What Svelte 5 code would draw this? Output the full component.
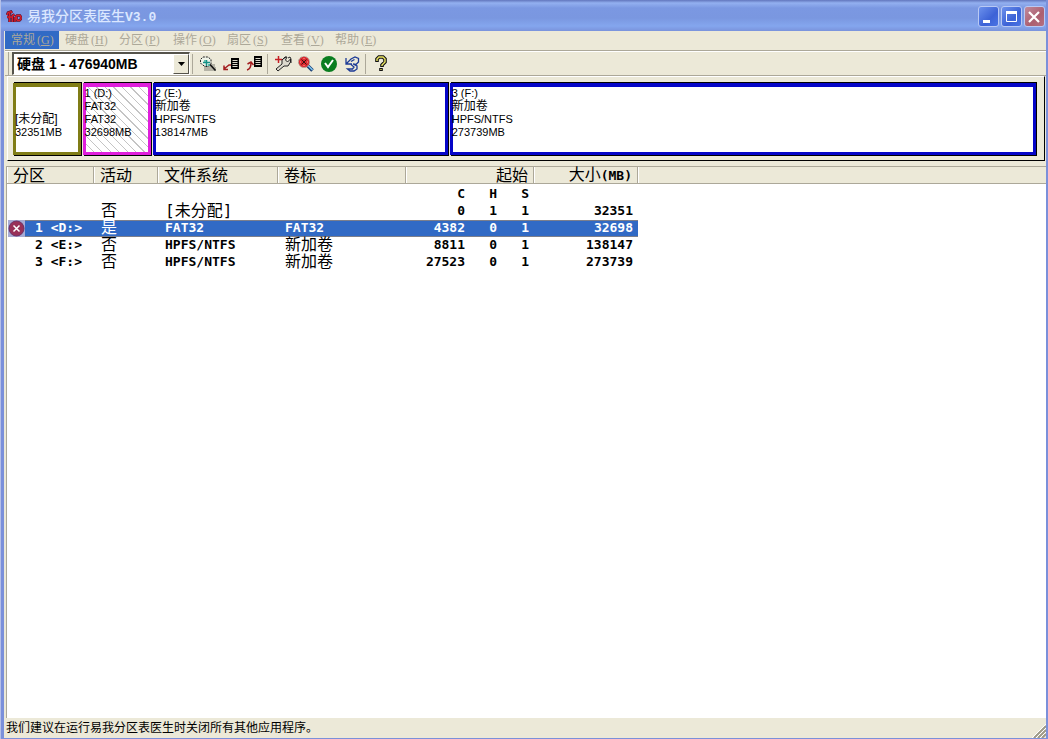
<script>
  const menus = [
    { label: '常规', key: 'G' },
    { label: '硬盘', key: 'H' },
    { label: '分区', key: 'P' },
    { label: '操作', key: 'O' },
    { label: '扇区', key: 'S' },
    { label: '查看', key: 'V' },
    { label: '帮助', key: 'E' }
  ];

  const partitions = [
    { no: '', drive: '', active: '否', fs: '[未分配]', label: '', c: 0, h: 1, s: 1, size: 32351, kind: 'free', lines: ['[未分配]'] },
    { no: '1', drive: '<D:>', active: '是', fs: 'FAT32', label: 'FAT32', c: 4382, h: 0, s: 1, size: 32698, kind: 'fat', lines: ['1 (D:)', 'FAT32', 'FAT32'] },
    { no: '2', drive: '<E:>', active: '否', fs: 'HPFS/NTFS', label: '新加卷', c: 8811, h: 0, s: 1, size: 138147, kind: 'ntfs', lines: ['2 (E:)', '新加卷', 'HPFS/NTFS'] },
    { no: '3', drive: '<F:>', active: '否', fs: 'HPFS/NTFS', label: '新加卷', c: 27523, h: 0, s: 1, size: 273739, kind: 'ntfs', lines: ['3 (F:)', '新加卷', 'HPFS/NTFS'] }
  ];

  let selected = 1;
  let disk = '1';

  const isHan = (text) => /[\u4e00-\u9fff]/.test(text);
</script>

<div class="window">
  <header class="titlebar">
    <svg class="logo" width="16" height="16" viewBox="0 0 16 16" aria-hidden="true">
      <path d="M1 6L2 3.500L5 2.500L6 4M3.500 4V13M1 8H6.500M6.500 13V6.500L8.500 5.500M9 13V8M9.500 8L11 6.500H14L15 8V10L13.500 11.500H11.500L10.500 10V8" fill="none" stroke="#4c1232" stroke-width="2.6" />
      <path d="M1 6L2 3.500L5 2.500L6 4M3.500 4V13M1 8H6.500M6.500 13V6.500L8.500 5.500M9 13V8M9.500 8L11 6.500H14L15 8V10L13.500 11.500H11.500L10.500 10V8" fill="none" stroke="#d8202c" stroke-width="1.4" />
    </svg>
    <h1>易我分区表医生<span>V3.0</span></h1>
    <div class="controls">
      <button aria-label="最小化"><svg width="18" height="18" viewBox="0 0 18 18"><path d="M4 12h7v3H4z" fill="#fff" /></svg></button>
      <button aria-label="最大化"><svg width="18" height="18" viewBox="0 0 18 18"><path d="M4.500 4.500h10v9h-10z" fill="none" stroke="#fff" /><path d="M4 3h11v3H4z" fill="#fff" /></svg></button>
      <button class="close" aria-label="关闭"><svg width="18" height="18" viewBox="0 0 18 18"><path d="M4 4l10 10M14 4L4 14" stroke="#fff" stroke-width="2.2" /></svg></button>
    </div>
  </header>

  <div class="client">
    <nav class="menubar">
      {#each menus as menu, i}
        <button class:open={i === 0}>{menu.label}<span class="key">(<u>{menu.key}</u>)</span></button>
      {/each}
    </nav>

    <div class="toolbar">
      <div class="combo">
        <select bind:value={disk} aria-label="硬盘">
          <option value="1">硬盘 1 - 476940MB</option>
        </select>
        <span class="drop"><svg width="7" height="4" viewBox="0 0 7 4"><path d="M0 0h7L3.5 4z" /></svg></span>
      </div>
      <div class="group">
        <button aria-label="查找分区">
          <svg width="18" height="18" viewBox="0 0 18 18">
            <path d="M5 11h3V9h8v3h1v4H5z" fill="#b5b3a6" />
            <path d="M3 9.500L1.500 8V4.500L4 2h5l3 2.500V9l-3 2.500H6z" fill="#eef3e8" stroke="#222" stroke-dasharray="2 1" />
            <path d="M4 7.500h7M7.500 5v6" stroke="#159086" stroke-width="1.500" />
            <path d="M5 5h2v2H5zM9 9h2v2H9z" fill="#5dbcae" />
            <path d="M11 9.500l5.500 6" stroke="#111" stroke-width="1.600" />
          </svg>
        </button>
        <button aria-label="保存分区表">
          <svg width="18" height="18" viewBox="0 0 18 18">
            <path d="M9 3h8v11H9z" fill="#000" />
            <path d="M10.500 5.500h5M10.500 7.500h5M10.500 9.500h5M10.500 11.500h5" stroke="#d9d7ca" />
            <path d="M9 10H7l-5 4M2 10.500V14.500h4" fill="none" stroke="#a31e20" stroke-width="1.5" />
          </svg>
        </button>
        <button aria-label="恢复分区表">
          <svg width="18" height="18" viewBox="0 0 18 18">
            <path d="M9 1h8v11H9z" fill="#000" />
            <path d="M10.500 3.500h5M10.500 5.500h5M10.500 7.500h5M10.500 9.500h5" stroke="#d9d7ca" />
            <path d="M2 15q4-1 4-7M2.500 9l3.500-2l2.500 3" fill="none" stroke="#a31e20" stroke-width="1.5" />
          </svg>
        </button>
      </div>
      <div class="group">
        <button aria-label="修复">
          <svg width="18" height="18" viewBox="0 0 18 18">
            <path d="M4.500 1v7M1 4.500h7" stroke="#c51f25" stroke-width="1.500" />
            <path d="M2 14l6-5V5l3-3h2l-1.500 3l2 2l3-3v3l-2.500 4h-4L4 16z" fill="#dcd9cd" stroke="#222" />
            <path d="M9 4l3-2M14 3l2-1l1 2v4" fill="none" stroke="#222" />
          </svg>
        </button>
        <button aria-label="删除分区">
          <svg width="18" height="18" viewBox="0 0 18 18">
            <path d="M10 10l5.500 5.500" stroke="#173a70" stroke-width="3.600" />
            <path d="M10.500 10l5 5" stroke="#7cc4ee" stroke-width="1.600" />
            <circle cx="7" cy="7" r="5.500" fill="#dc2a30" stroke="#a49e94" stroke-dasharray="2 1" />
            <path d="M4.500 4.500l5 5M9.500 4.500l-5 5" stroke="#3d1012" />
            <path d="M7 3v1M3 7h1M7 10v1M10 7h1" stroke="#f9a7a4" />
          </svg>
        </button>
        <button aria-label="应用">
          <svg width="18" height="18" viewBox="0 0 18 18">
            <circle cx="9" cy="9" r="8" fill="#0a7d20" />
            <path d="M5 8l3 4l5-7" fill="none" stroke="#fff" stroke-width="2" />
          </svg>
        </button>
        <button aria-label="撤销">
          <svg width="18" height="18" viewBox="0 0 18 18">
            <path d="M3 3v6h6M3.500 8.500L8 4l4-2l3.500 1.500V7L13 9.500l-3-.5M8 6.500l3.500-2M10 9l4 2v3l-3 2H7l-2.500-2h5L11 12L8 9.500" fill="none" stroke="#1c3a96" stroke-width="1.300" />
          </svg>
        </button>
      </div>
      <div class="group">
        <button aria-label="帮助">
          <svg width="18" height="18" viewBox="0 0 18 18">
            <path d="M5 7V4l2-2h4l2 2v3l-3 3v2M9 13v3" fill="none" stroke="#111" stroke-width="3.600" />
            <path d="M5 6V4l2-2h4l2 2v3l-3 3v1M9 14v1" fill="none" stroke="#eee860" stroke-width="1.400" />
          </svg>
        </button>
      </div>
    </div>

    <section class="map" aria-label="分区图">
      {#each partitions as part, i}
        <div class="slot" style="flex-grow: {part.size}">
          <button class="part {part.kind}" class:hatched={i === selected} on:click={() => (selected = i)}>
            {#each part.lines as line}
              <span class:han={isHan(line)}>{line}</span>
            {/each}
            <span>{part.size}MB</span>
          </button>
        </div>
      {/each}
    </section>

    <main class="list">
      <table>
        <colgroup>
          <col class="c-icon" /><col class="c-no" /><col class="c-active" /><col class="c-fs" /><col class="c-label" />
          <col class="c-cyl" /><col class="c-head" /><col class="c-head" /><col class="c-size" /><col />
        </colgroup>
        <thead>
          <tr>
            <th colspan="2">分区</th>
            <th>活动</th>
            <th>文件系统</th>
            <th>卷标</th>
            <th colspan="3" class="num">起始</th>
            <th class="num">大小<span class="latin">(MB)</span></th>
            <th class="rest"></th>
          </tr>
        </thead>
        <tbody>
          <tr class="units">
            <td colspan="5"></td>
            <td class="num">C</td>
            <td class="num">H</td>
            <td class="num">S</td>
            <td colspan="2"></td>
          </tr>
          {#each partitions as part, i}
            <tr class:selected={i === selected} on:click={() => (selected = i)}>
              <td class="icon">
                {#if i === selected}
                  <svg width="17" height="17" viewBox="0 0 17 17">
                    <path d="M0 0h17v17H0z" fill="#a7abd3" />
                    <circle cx="8.5" cy="8.5" r="7.500" fill="#983058" stroke="#6c2f66" />
                    <path d="M5.500 5.500l6 6M11.500 5.500l-6 6" stroke="#fff" stroke-width="1.500" />
                  </svg>
                {/if}
              </td>
              <td class="no">{part.no} {part.drive}</td>
              <td class="han">{part.active}</td>
              <td class:han={isHan(part.fs)}>{part.fs}</td>
              <td class:han={isHan(part.label)}>{part.label}</td>
              <td class="num">{part.c}</td>
              <td class="num">{part.h}</td>
              <td class="num">{part.s}</td>
              <td class="num">{part.size}</td>
              <td class="rest"></td>
            </tr>
          {/each}
        </tbody>
      </table>
    </main>

    <footer class="status">
      <span>我们建议在运行易我分区表医生时关闭所有其他应用程序。</span>
      <svg width="14" height="14" viewBox="0 0 14 14" aria-hidden="true">
        <path d="M2 14L14 2M6 14l8-8M10 14l4-4" stroke="#9d9a88" stroke-width="2" />
        <path d="M0 14L14 0M4 14L14 4M8 14l6-6" stroke="#fff" />
      </svg>
    </footer>
  </div>
</div>

<style>
  :global(body) {
    margin: 0;
    background: #7b90da;
  }
  button {
    margin: 0;
    padding: 0;
    border: 0;
    background: none;
    font: inherit;
    color: inherit;
  }
  .window {
    display: flex;
    flex-direction: column;
    min-height: 100vh;
    box-sizing: border-box;
    padding: 0 2px 1px 0;
    border-left: 1px solid #b6c0e8;
    background: #7b90da;
    font-family: "Liberation Sans", "Noto Sans CJK SC", sans-serif;
    font-size: 12px;
    color: #000;
  }
  .titlebar {
    display: flex;
    align-items: center;
    height: 31px;
    padding: 2px 1px 0 5px;
    box-sizing: border-box;
    background: linear-gradient(#6276bd 0, #93b0f0 3px, #7b98e2 8px, #7a97e0 18px, #84a6ee 26px, #7a93dc 31px);
  }
  h1 {
    flex: 1;
    margin: 0 0 0 5px;
    font-size: 14px;
    font-weight: 500;
    line-height: 20px;
    color: #dbe7ff;
  }
  h1 span {
    font-family: "Liberation Mono", monospace;
    font-size: 13px;
    font-weight: bold;
  }
  .controls {
    display: flex;
    gap: 2px;
  }
  .controls button {
    width: 21px;
    height: 21px;
    box-sizing: border-box;
    border: 1px solid #b9c9f4;
    border-radius: 3px;
    background: linear-gradient(135deg, #6c91ec, #3c62d6 60%, #4a74e4);
  }
  .controls svg {
    display: block;
  }
  .controls .close {
    background: linear-gradient(135deg, #c08a9c, #ac5f70 60%, #b57080);
  }
  .client {
    flex: 1;
    display: flex;
    flex-direction: column;
    margin-left: 3px;
    padding-left: 1px;
    background: #ece9d8;
  }
  .menubar {
    display: flex;
    height: 19px;
    border-bottom: 1px solid #aca899;
  }
  .menubar button {
    width: 54px;
    height: 18px;
    padding-left: 6px;
    color: #aca899;
    line-height: 17px;
    text-align: left;
    white-space: nowrap;
  }
  .menubar .open {
    background: #316ac5;
  }
  .key {
    margin-left: 2px;
    font-family: "Liberation Serif", serif;
  }
  .toolbar {
    display: flex;
    align-items: center;
    height: 23px;
    padding-left: 3px;
    border-top: 1px solid #fff;
    border-bottom: 1px solid #aca899;
  }
  .combo {
    display: flex;
    position: relative;
    width: 182px;
    height: 23px;
    box-sizing: border-box;
    padding-left: 3px;
    border-left: 1px solid #aca899;
  }
  .combo select {
    width: 100%;
    padding: 0 20px 0 3px;
    border: 1px solid #fff;
    border-top: 2px solid #55534b;
    border-left: 2px solid #55534b;
    border-radius: 0;
    appearance: none;
    background: #fff;
    color: #000;
    font-family: "Liberation Sans", "Noto Sans CJK SC", sans-serif;
    font-size: 14px;
    font-weight: bold;
  }
  .drop {
    display: flex;
    position: absolute;
    top: 2px;
    right: 1px;
    bottom: 1px;
    width: 16px;
    box-sizing: border-box;
    align-items: center;
    justify-content: center;
    border: 1px solid #fff;
    border-right-color: #55534b;
    border-bottom-color: #55534b;
    background: #ece9d8;
    pointer-events: none;
  }
  .group {
    display: flex;
    gap: 1px;
    padding-left: 4px;
    margin-left: 2px;
    border-left: 1px solid #aca899;
  }
  .group button {
    width: 22px;
    height: 20px;
  }
  .group svg {
    display: block;
    margin: 0 auto;
  }
  .map {
    display: flex;
    margin: 0 1px 0 2px;
    padding: 5px 6px 4px 5px;
    border: 1px solid #000;
    border-top-color: #fff;
    border-left-color: #fff;
  }
  .slot {
    display: flex;
    flex-basis: 0;
    min-width: 0;
    height: 74px;
  }
  .part {
    flex: 1;
    display: flex;
    flex-direction: column;
    justify-content: flex-start;
    min-width: 0;
    margin: 1px 2px 1px 0;
    border: 3px solid;
    border-top-width: 4px;
    box-shadow: 1px 1px #000, 1px -1px #000;
    background: #fff;
    text-align: left;
    font-size: 11px;
    line-height: 13px;
    white-space: nowrap;
  }
  .part span {
    margin-left: -1px;
  }
  .part .han {
    font-size: 12px;
  }
  .free {
    justify-content: center;
    padding-top: 12px;
    border-color: #807d16;
  }
  .fat {
    border-color: #e01fdc;
  }
  .ntfs {
    border-color: #0505c8;
  }
  .hatched {
    background: repeating-linear-gradient(45deg, #fff 0, #fff 5px, #c4c4c4 5px, #c4c4c4 6px);
  }
  .list {
    flex: 1;
    margin: 5px 0 0 1px;
    border-top: 1px solid #aca899;
    border-left: 1px solid #aca899;
    background: #fff;
  }
  table {
    width: 100%;
    table-layout: fixed;
    border-collapse: separate;
    border-spacing: 0;
    font-family: "DejaVu Sans Mono", "Noto Sans CJK SC", monospace;
    font-size: 13px;
    font-weight: bold;
    line-height: 16px;
    cursor: default;
  }
  .c-icon {
    width: 18px;
  }
  .c-no {
    width: 69px;
  }
  .c-active {
    width: 64px;
  }
  .c-fs {
    width: 120px;
  }
  .c-label {
    width: 128px;
  }
  .c-cyl {
    width: 64px;
  }
  .c-head {
    width: 32px;
  }
  .c-size {
    width: 104px;
  }
  th {
    height: 16px;
    padding: 0 6px;
    border-right: 1px solid #aca899;
    border-bottom: 1px solid #aca899;
    box-shadow: inset 1px 0 #fff;
    background: #ece9d8;
    text-align: left;
    font-size: 16px;
    font-weight: normal;
    line-height: 15px;
    white-space: nowrap;
  }
  .latin {
    font-size: 13px;
    font-weight: bold;
  }
  th.rest {
    border-right: 0;
  }
  td {
    height: 17px;
    padding: 0 0 0 7px;
    box-sizing: border-box;
    vertical-align: top;
    white-space: nowrap;
  }
  td.icon {
    padding: 0 0 0 1px;
  }
  .icon svg {
    display: block;
  }
  td.no {
    padding-left: 10px;
    white-space: pre;
  }
  td.han {
    font-size: 16px;
    font-weight: normal;
  }
  .num {
    padding: 0 5px 0 0;
    text-align: right;
  }
  .units td {
    height: 19px;
    padding-bottom: 1px;
    vertical-align: bottom;
  }
  .selected td:not(.icon):not(.rest) {
    background: #316ac5;
    color: #fff;
    box-shadow: inset 0 1px #7c7f8c, inset 0 -1px #7c7f8c;
  }
  .status {
    display: flex;
    align-items: flex-end;
    justify-content: space-between;
    height: 20px;
    padding-left: 1px;
    line-height: 19px;
  }
</style>
